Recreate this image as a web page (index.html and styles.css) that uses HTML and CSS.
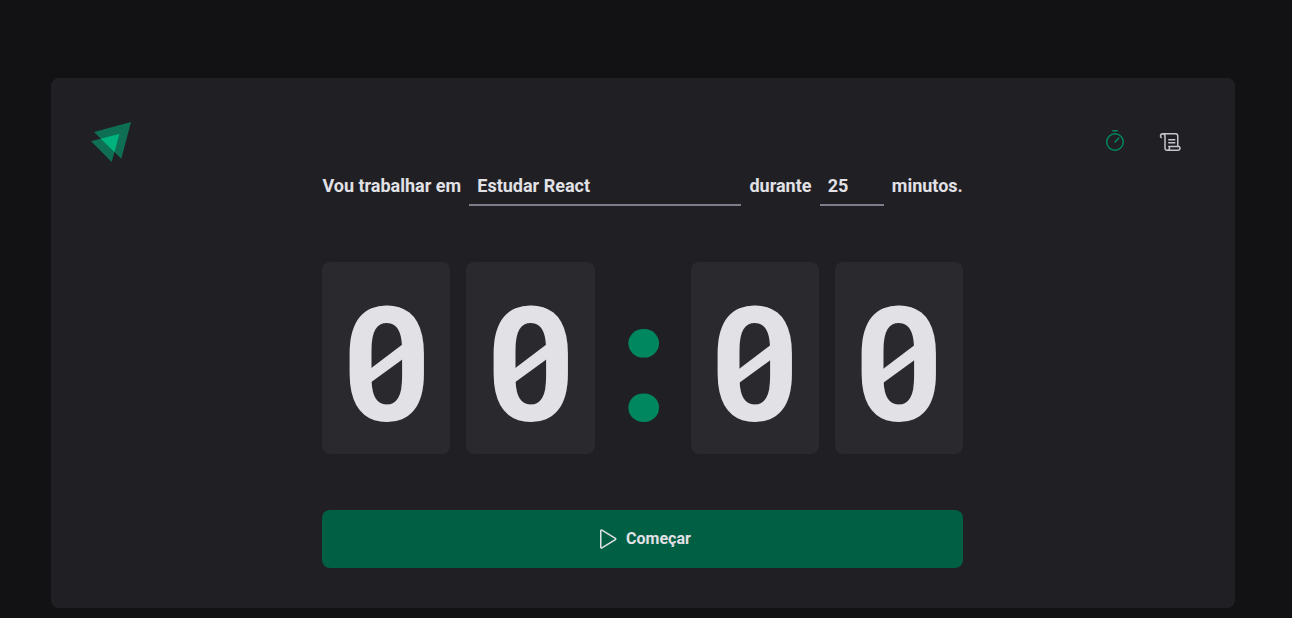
FILE: index.html
```html
<!DOCTYPE html>
<html lang="pt-BR">
<head>
<meta charset="utf-8">
<title>Ignite Timer</title>
<link rel="stylesheet" href="styles.css">
</head>
<body>
<div class="layout">
  <header class="header">
    <svg class="logo" viewBox="0 0 40 40">
      <path class="logo-shade" d="M3 14 40 4 30.3 40.7Z"/>
      <path class="logo-shade" d="M0 23.3 28.3 16 20.7 44Z"/>
      <path class="logo-core" d="M10 20.8 28.3 16 23.4 34.1Z"/>
    </svg>
    <nav class="nav">
      <a class="nav-link active" title="Timer">
        <svg class="icon" viewBox="0 0 256 256"><circle cx="128" cy="128" r="88"/><path d="M128 128 167.6 88.4M104 8H152"/></svg>
      </a>
      <a class="nav-link" title="Histórico">
        <svg class="icon" viewBox="0 0 256 256"><path d="M104 104H168M104 136H168M40 40H176a24 24 0 0 1 24 24V176"/><path d="M24 80s-8-6-8-16a24 24 0 0 1 48 0V192a24 24 0 0 0 48 0c0-10-8-16-8-16H216s8 6 8 16a24 24 0 0 1-24 24H88"/></svg>
      </a>
    </nav>
  </header>
  <form class="home">
    <div class="task-row">
      <label for="task">Vou trabalhar em</label>
      <input class="field task" id="task" type="text" value="Estudar React">
      <label for="minutes">durante</label>
      <input class="field minutes" id="minutes" type="text" value="25">
      <span>minutos.</span>
    </div>
    <div class="countdown">
      <div class="digit first"><span class="numeral">0</span></div>
      <div class="digit"><span class="numeral">0</span></div>
      <svg class="separator" viewBox="0 0 64 192">
        <rect x="17.4" y="67" width="30.6" height="28.6" rx="14.8" ry="14.3"/>
        <rect x="17.4" y="131.4" width="30.6" height="28.6" rx="14.8" ry="14.3"/>
      </svg>
      <div class="digit"><span class="numeral">0</span></div>
      <div class="digit"><span class="numeral">0</span></div>
    </div>
    <button class="start" type="button">
      <svg class="icon" viewBox="0 0 256 256"><path d="M72 39.9V216.1a8 8 0 0 0 12.2 6.8l144-88.1a7.9 7.9 0 0 0 0-13.6L84.2 33.1A8 8 0 0 0 72 39.9Z"/></svg>
      <span class="start-label">Começar</span>
    </button>
  </form>
</div>
</body>
</html>
```

FILE: styles.css
```css
* { margin: 0; padding: 0; box-sizing: border-box; }
body {
  background: #121214;
  color: #e1e1e6;
  font-family: Roboto, "Liberation Sans", sans-serif;
  overflow: hidden;
}
.layout {
  width: 1184px;
  height: 530px;
  margin: 78px 0 0 51px;
  padding: 40px;
  background: #202024;
  border-radius: 8px;
}
.header { display: flex; justify-content: space-between; height: 48px; }
.logo { width: 40px; height: 40px; overflow: visible; }
.logo-shade { fill: #00b37e; fill-opacity: .54; }
.logo-core { fill: #00b37e; }
.nav { display: flex; gap: 8px; }
.nav-link { display: flex; align-items: center; justify-content: center; width: 48px; height: 48px; color: #c4c4cc; }
.active { color: #00875f; }
.icon { width: 24px; height: 24px; fill: none; stroke: currentColor; stroke-width: 16; stroke-linecap: round; stroke-linejoin: round; }
.home { width: 641px; margin-left: 231px; }
.task-row { display: flex; align-items: center; justify-content: space-between; padding: 0 .15px 0 .4px; font-size: 18px; font-weight: 700; line-height: 40px; }
.field { height: 40px; padding: 1px 8px 0; background: none; border: 0; border-bottom: 2px solid #7c7c8a; color: inherit; font: inherit; line-height: 38px; }
.task { width: 272px; }
.minutes { width: 64px; }
.countdown { display: grid; grid-template-columns: 128px 129px 64px 128px 128px; grid-template-rows: 192px; gap: 16px; margin-top: 56px; }
.digit {
  position: relative;
  display: flex;
  justify-content: center;
  height: 192px;
  background: #29292e;
  border-radius: 8px;
  font-size: 160px;
  font-weight: 700;
  line-height: 207px;
}
.first { padding-left: 1px; }
.numeral { transform: scaleX(.965); }
/* diagonal bar of the slashed zero */
.digit::after {
  content: "";
  position: absolute;
  left: 48px;
  top: 82px;
  width: 33px;
  height: 39px;
  background: #e1e1e6;
  clip-path: polygon(0 25px, 100% 0, 100% 15px, 0 100%);
}
.separator { width: 64px; height: 192px; fill: #00875f; }
.start {
  display: flex;
  align-items: center;
  justify-content: center;
  gap: 8px;
  width: 100%;
  height: 58px;
  margin-top: 56px;
  border: 0;
  border-radius: 8px;
  background: #015f43;
  color: #e1e1e6;
  font: 700 16px Roboto, "Liberation Sans", sans-serif;
}
.start-label { padding-bottom: 2px; }
```
